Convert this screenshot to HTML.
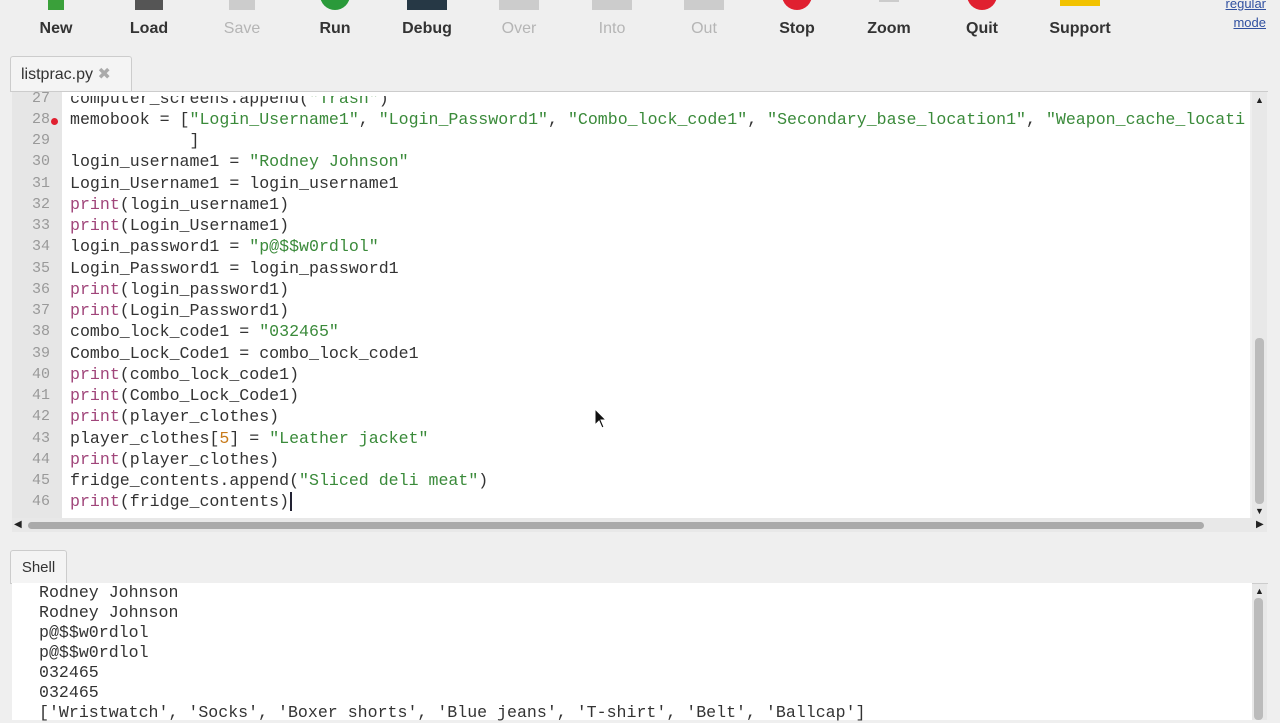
<!DOCTYPE html>
<html><head><meta charset="utf-8"><style>
body{margin:0;width:1280px;height:720px;overflow:hidden;background:#efefef;font-family:"Liberation Sans",sans-serif;position:relative}
.tb{position:absolute;top:20px;font-size:16px;font-weight:bold;color:#333;transform:translateX(-50%)}
.tb.dis{color:#b5b5b5;font-weight:normal}
.ic{position:absolute;top:-10px;width:30px;height:20px;transform:translateX(-50%)}
.mono{font-family:"Liberation Mono",monospace}
.ln{position:absolute;left:12px;width:50px;top:92px;height:426px;background:#e6e6e6}
.code{position:absolute;left:62px;top:92px;width:1188px;height:426px;background:#fff;overflow:hidden}
.l{position:absolute;left:8px;font-size:16.6px;white-space:pre;color:#333;line-height:21px}
.n{position:absolute;left:20px;width:30px;text-align:right;font-size:15px;color:#999;line-height:21px;white-space:pre}
.p{color:#a0457a}.s{color:#3a8a3a}.o{color:#c77a1a}
.sh{position:absolute;left:12px;top:583px;width:1240px;height:137px;background:#fff}
.sl{position:absolute;left:27px;font-size:16.6px;color:#333;white-space:pre;line-height:20px}
</style></head><body>
<div class="ic" style="left:56px;background:#3aa03a;width:16px"></div>
<div class="ic" style="left:149px;background:#555;width:28px"></div>
<div class="ic" style="left:242px;background:#ccc;width:26px"></div>
<div class="ic" style="left:335px;top:-20px;height:30px;border-radius:50%;background:#2a9a3a"></div>
<div class="ic" style="left:427px;background:#263845;width:40px"></div>
<div class="ic" style="left:519px;background:#ccc;width:40px"></div>
<div class="ic" style="left:612px;background:#ccc;width:40px"></div>
<div class="ic" style="left:704px;background:#ccc;width:40px"></div>
<div class="ic" style="left:797px;top:-20px;height:30px;border-radius:50%;background:#e02030"></div>
<div class="ic" style="left:889px;background:#ccc;width:20px;height:12px"></div>
<div class="ic" style="left:982px;top:-20px;height:30px;border-radius:50%;background:#e02030"></div>
<div class="ic" style="left:1080px;background:#f2c200;width:40px;height:16px"></div>
<div class="tb" style="left:56px">New</div><div class="tb" style="left:149px">Load</div>
<div class="tb dis" style="left:242px">Save</div><div class="tb" style="left:335px">Run</div>
<div class="tb" style="left:427px">Debug</div><div class="tb dis" style="left:519px">Over</div>
<div class="tb dis" style="left:612px">Into</div><div class="tb dis" style="left:704px">Out</div>
<div class="tb" style="left:797px">Stop</div><div class="tb" style="left:889px">Zoom</div>
<div class="tb" style="left:982px">Quit</div><div class="tb" style="left:1080px">Support</div>
<div style="position:absolute;right:14px;top:-6px;font-size:13px;color:#3050a0;text-decoration:underline;text-align:right;line-height:19px">regular<br>mode</div>
<div style="position:absolute;left:10px;top:56px;width:122px;height:36px;background:#f4f4f4;border:1px solid #ccc;border-bottom:none;border-radius:3px 3px 0 0;font-size:16px;color:#333;line-height:36px;padding-left:10px;box-sizing:border-box">listprac.py <span style="color:#aaa">✖</span></div>
<div style="position:absolute;left:10px;top:91px;width:1258px;height:1px;background:#ccc"></div>
<div class="ln mono"></div>
<div class="code mono"></div>
<div class="mono" id="ed"></div>
<div style="position:absolute;left:1252px;top:92px;width:15px;height:426px;background:#e8e8e8"></div>
<div style="position:absolute;left:1255px;top:338px;width:9px;height:166px;background:#bbb;border-radius:4px"></div>
<div style="position:absolute;left:1255px;top:95px;font-size:9px;color:#222">▲</div>
<div style="position:absolute;left:1255px;top:506px;font-size:9px;color:#222">▼</div>
<div style="position:absolute;left:12px;top:518px;width:1255px;height:14px;background:#e8e8e8"></div>
<div style="position:absolute;left:28px;top:522px;width:1176px;height:7px;background:#aaa;border-radius:4px"></div>
<div style="position:absolute;left:14px;top:519px;font-size:10px;color:#222">◀</div>
<div style="position:absolute;left:1256px;top:519px;font-size:10px;color:#222">▶</div>
<div style="position:absolute;left:10px;top:550px;width:57px;height:34px;background:#f4f4f4;border:1px solid #ccc;border-bottom:none;border-radius:3px 3px 0 0;font-size:15px;color:#333;line-height:34px;text-align:center;box-sizing:border-box">Shell</div>
<div style="position:absolute;left:10px;top:583px;width:1258px;height:1px;background:#ccc"></div>
<div class="sh mono">
<div class="sl" style="top:0">Rodney Johnson</div>
<div class="sl" style="top:20px">Rodney Johnson</div>
<div class="sl" style="top:40px">p@$$w0rdlol</div>
<div class="sl" style="top:60px">p@$$w0rdlol</div>
<div class="sl" style="top:80px">032465</div>
<div class="sl" style="top:100px">032465</div>
<div class="sl" style="top:120px">['Wristwatch', 'Socks', 'Boxer shorts', 'Blue jeans', 'T-shirt', 'Belt', 'Ballcap']</div>
</div>
<div style="position:absolute;left:1252px;top:584px;width:15px;height:136px;background:#e8e8e8"></div>
<div style="position:absolute;left:1254px;top:598px;width:9px;height:122px;background:#bbb;border-radius:4px"></div>
<div style="position:absolute;left:1255px;top:586px;font-size:9px;color:#222">▲</div>
<div id="lines" class="mono" style="position:absolute;left:0;top:0">
<div class="n" style="top:88px">27</div><div class="l" style="left:70px;top:88px;clip-path:inset(8px 0 0 0)">computer_screens.append(<span class="s">"Trash"</span>)</div>
<div class="n" style="top:109px">28</div><div style="position:absolute;left:51px;top:118px;width:7px;height:7px;border-radius:50%;background:#e02030"></div>
<div class="l" style="left:70px;top:109px">memobook = [<span class="s">"Login_Username1"</span>, <span class="s">"Login_Password1"</span>, <span class="s">"Combo_lock_code1"</span>, <span class="s">"Secondary_base_location1"</span>, <span class="s">"Weapon_cache_locati</span></div>
<div class="n" style="top:130px">29</div><div class="l" style="left:70px;top:130px">            ]</div>
<div class="n" style="top:151px">30</div><div class="l" style="left:70px;top:151px">login_username1 = <span class="s">"Rodney Johnson"</span></div>
<div class="n" style="top:173px">31</div><div class="l" style="left:70px;top:173px">Login_Username1 = login_username1</div>
<div class="n" style="top:194px">32</div><div class="l" style="left:70px;top:194px"><span class="p">print</span>(login_username1)</div>
<div class="n" style="top:215px">33</div><div class="l" style="left:70px;top:215px"><span class="p">print</span>(Login_Username1)</div>
<div class="n" style="top:236px">34</div><div class="l" style="left:70px;top:236px">login_password1 = <span class="s">"p@$$w0rdlol"</span></div>
<div class="n" style="top:258px">35</div><div class="l" style="left:70px;top:258px">Login_Password1 = login_password1</div>
<div class="n" style="top:279px">36</div><div class="l" style="left:70px;top:279px"><span class="p">print</span>(login_password1)</div>
<div class="n" style="top:300px">37</div><div class="l" style="left:70px;top:300px"><span class="p">print</span>(Login_Password1)</div>
<div class="n" style="top:321px">38</div><div class="l" style="left:70px;top:321px">combo_lock_code1 = <span class="s">"032465"</span></div>
<div class="n" style="top:343px">39</div><div class="l" style="left:70px;top:343px">Combo_Lock_Code1 = combo_lock_code1</div>
<div class="n" style="top:364px">40</div><div class="l" style="left:70px;top:364px"><span class="p">print</span>(combo_lock_code1)</div>
<div class="n" style="top:385px">41</div><div class="l" style="left:70px;top:385px"><span class="p">print</span>(Combo_Lock_Code1)</div>
<div class="n" style="top:406px">42</div><div class="l" style="left:70px;top:406px"><span class="p">print</span>(player_clothes)</div>
<div class="n" style="top:428px">43</div><div class="l" style="left:70px;top:428px">player_clothes[<span class="o">5</span>] = <span class="s">"Leather jacket"</span></div>
<div class="n" style="top:449px">44</div><div class="l" style="left:70px;top:449px"><span class="p">print</span>(player_clothes)</div>
<div class="n" style="top:470px">45</div><div class="l" style="left:70px;top:470px">fridge_contents.append(<span class="s">"Sliced deli meat"</span>)</div>
<div class="n" style="top:491px">46</div><div class="l" style="left:70px;top:491px"><span class="p">print</span>(fridge_contents)<span style="border-left:2px solid #223;margin-left:1px"></span></div>
</div>
<svg style="position:absolute;left:594px;top:408px" width="14" height="22" viewBox="0 0 14 22"><path d="M1 1 L1 17 L5 13 L8 20 L10 19 L7 12 L12 12 Z" fill="#111" stroke="#fff" stroke-width="1"/></svg>
</body></html>
